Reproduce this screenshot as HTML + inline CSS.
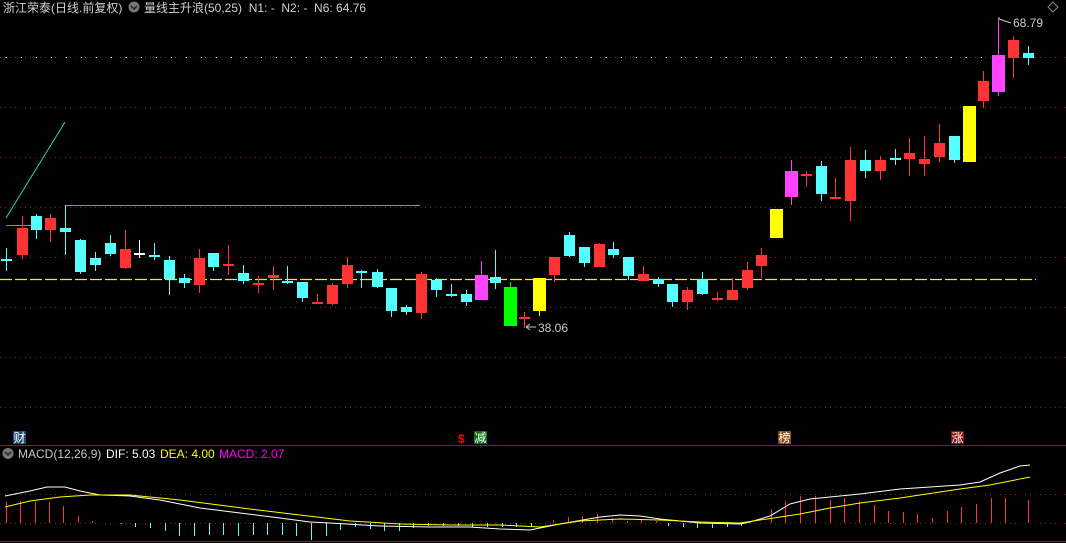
<!DOCTYPE html>
<html><head><meta charset="utf-8"><style>
html,body{margin:0;padding:0;background:#000;width:1066px;height:543px;overflow:hidden}
svg{display:block}
text{font-family:"Liberation Sans","Noto Sans CJK SC",sans-serif}
</style></head><body>
<svg id="s" width="1066" height="543" xmlns="http://www.w3.org/2000/svg">
<rect width="1066" height="543" fill="#000"/>
<g stroke="#a01818" stroke-width="1" stroke-dasharray="1,4">
<line x1="0" y1="57.5" x2="1066" y2="57.5"/><line x1="0" y1="107.5" x2="1066" y2="107.5"/>
<line x1="0" y1="157.5" x2="1066" y2="157.5"/><line x1="0" y1="207.5" x2="1066" y2="207.5"/>
<line x1="0" y1="257.5" x2="1066" y2="257.5"/><line x1="0" y1="307.5" x2="1066" y2="307.5"/>
<line x1="0" y1="357.5" x2="1066" y2="357.5"/><line x1="0" y1="407.5" x2="1066" y2="407.5"/>
<line x1="0" y1="494.5" x2="1066" y2="494.5"/><line x1="0" y1="523.5" x2="1066" y2="523.5"/>
</g>
<g stroke="#fff" stroke-dasharray="1,14"><line x1="6" y1="57.5" x2="990" y2="57.5"/></g>
<line x1="0" y1="445.5" x2="1066" y2="445.5" stroke="#b01010"/>
<line x1="0" y1="541.5" x2="1066" y2="541.5" stroke="#b01010"/>
<line x1="0" y1="279.5" x2="1036" y2="279.5" stroke="#f0f000" stroke-width="1.2" stroke-dasharray="12,3"/>
<line x1="6" y1="218" x2="65" y2="122" stroke="#2ad0d0"/>
<line x1="6" y1="225.5" x2="36" y2="225.5" stroke="#20d020"/>
<line x1="65.5" y1="205.5" x2="420" y2="205.5" stroke="#30d030"/>
<line x1="65.5" y1="205" x2="65.5" y2="255" stroke="#5ff"/>
<g id="c"></g>
<g id="m"></g>
<text x="3" y="12" font-size="12" fill="#d0d0d0">浙江荣泰(日线.前复权)</text>
<circle cx="134" cy="7" r="5.5" fill="#777"/><path d="M131 6l3 3 3-3" stroke="#222" fill="none" stroke-width="1.5"/>
<text x="144" y="12" font-size="12" fill="#d0d0d0">量线主升浪(50,25)&#160; N1: -&#160; N2: -&#160; N6: 64.76</text>
<path d="M1053 2l5 5-5 5-5-5z" fill="none" stroke="#888"/>
<path d="M999 19l0 -2M999 19l12 4" stroke="#ccc" fill="none"/>
<text x="1013" y="27" font-size="12" fill="#ccc">68.79</text>
<path d="M526 327h10M526 327l4-3M526 327l4 3" stroke="#ccc" fill="none"/>
<text x="538" y="332" font-size="12" fill="#ccc">38.06</text>
<rect x="13" y="431" width="13" height="13" fill="#1a4a80"/><text x="13.5" y="442" font-size="12" fill="#fff">财</text>
<text x="458" y="443" font-size="12" fill="#f00" font-weight="bold">$</text>
<rect x="474" y="431" width="13" height="13" fill="#107010"/><text x="474.5" y="442" font-size="12" fill="#fff">减</text>
<rect x="778" y="431" width="13" height="13" fill="#8a4a10"/><text x="778.5" y="442" font-size="12" fill="#fff">榜</text>
<rect x="951" y="431" width="13" height="13" fill="#8a1010"/><text x="951.5" y="442" font-size="12" fill="#fff">涨</text>
<circle cx="8" cy="453.5" r="5.5" fill="#777"/><path d="M5 452l3 3 3-3" stroke="#222" fill="none" stroke-width="1.5"/>
<text x="18" y="458" font-size="12" fill="#c8c8c8">MACD(12,26,9)</text>
<text x="106" y="458" font-size="12" fill="#fff">DIF: 5.03</text>
<text x="160" y="458" font-size="12" fill="#ff0">DEA: 4.00</text>
<text x="219" y="458" font-size="12" fill="#f0f">MACD: 2.07</text>
</svg>
<script>
var C={r:"#ff3333",c:"#55ffff",w:"#ffffff",m:"#ff44ff",g:"#00ff00",y:"#ffff00"};
var k=[[6,259,260,248,271,'c'],[22,228,255,216,259,'r'],[36,216,230,214,239,'c'],[50,218,230,214,242,'r'],[65,228,232,205,255,'c'],
[80,240,272,239,274,'c'],[95,258,265,252,271,'c'],[110,243,254,235,256,'c'],[125,249,268,230,269,'r'],[139,253,254,240,258,'w'],
[154,255,256,243,260,'c'],[169,260,279,256,295,'c'],[184,278,283,274,288,'c'],[199,258,285,249,293,'r'],[213,253,267,253,271,'c'],
[228,264,265,245,275,'r'],[243,273,281,265,284,'c'],[258,283,284,276,293,'r'],[273,275,278,266,290,'r'],[287,281,282,266,284,'c'],
[302,282,298,282,302,'c'],[317,302,303,294,304,'r'],[332,285,304,283,305,'r'],[347,265,284,257,288,'r'],[361,271,272,270,288,'c'],
[377,272,287,269,288,'c'],[391,288,311,288,317,'c'],[406,307,312,305,315,'c'],[421,274,313,272,319,'r'],[436,280,290,278,297,'c'],
[451,294,295,284,297,'c'],[466,294,302,290,306,'c'],[481,275,300,261,300,'m'],[495,277,283,250,289,'c'],[510,287,326,282,326,'g'],
[524,317,318,312,328,'r'],[539,278,311,278,316,'y'],[554,257,275,257,282,'r'],[569,235,256,232,257,'c'],[584,247,263,247,267,'c'],
[599,244,267,243,267,'r'],[613,249,255,242,258,'c'],[628,257,276,257,280,'c'],[643,274,281,266,281,'r'],[658,279,284,277,287,'c'],
[672,284,302,284,307,'c'],[687,290,302,287,310,'r'],[702,279,294,272,295,'c'],[717,298,299,292,301,'r'],[732,290,300,278,300,'r'],
[747,270,288,262,290,'r'],[761,255,266,248,278,'r'],[776,209,238,209,238,'y'],[791,171,197,160,205,'m'],[806,174,175,171,187,'r'],
[821,166,194,161,201,'c'],[835,197,198,178,198,'r'],[850,160,201,147,221,'r'],[865,160,171,150,178,'c'],[880,160,171,156,180,'r'],
[895,158,159,149,165,'c'],[909,153,159,138,176,'r'],[924,159,164,136,176,'r'],[939,143,157,124,162,'r'],[954,136,160,136,163,'c'],
[969,106,162,106,162,'y'],[983,81,101,71,108,'r'],[998,55,92,19,96,'m'],[1013,40,58,36,78,'r'],[1028,53,58,46,65,'c']];
var h='';
k.forEach(function(a){var col=C[a[5]];var big='mgy'.indexOf(a[5])>=0;var w=big?13:11;
h+='<line x1="'+(a[0]+.5)+'" y1="'+a[3]+'" x2="'+(a[0]+.5)+'" y2="'+a[4]+'" stroke="'+col+'"/>';
var hh=Math.max(a[2]-a[1],2);h+='<rect x="'+(a[0]-(w-1)/2)+'" y="'+a[1]+'" width="'+w+'" height="'+hh+'" fill="'+col+'"/>';});
document.getElementById('c').innerHTML=h;
var m='';
var red=[[6,502],[20,501],[35,502],[49,502],[63,506],[78,516],[92,521],[553,520],[568,517],[582,516],[597,514],[612,518],[627,521],[641,520],[656,521],[771,509],[785,501],[800,496],[815,496],[830,500],[844,498],[859,501],[874,505],[888,511],[903,512],[917,514],[932,518],[947,511],[961,507],[976,504],[991,498],[1005,498],[1028,500]];
red.forEach(function(b){m+='<line x1="'+(b[0]+.5)+'" y1="'+b[1]+'" x2="'+(b[0]+.5)+'" y2="523" stroke="#ff3333"/>';});
var cy=[[121,524],[135,527],[150,528],[165,531],[179,536],[194,536],[209,535],[223,535],[238,536],[253,535],[267,535],[282,535],[296,536],[311,540],[326,536],[340,530],[355,527],[370,529],[384,531],[399,531],[413,528],[428,526],[443,526],[458,526],[472,527],[487,527],[502,527],[516,527],[531,527],[668,526],[683,527],[697,528],[712,528],[727,527],[741,526]];
cy.forEach(function(b){m+='<line x1="'+(b[0]+.5)+'" y1="523" x2="'+(b[0]+.5)+'" y2="'+b[1]+'" stroke="#55ffff"/>';});
m+='<polyline fill="none" stroke="#fff" points="5,496 30,491 47,487 65,487 80,491 100,495 130,496 160,500 200,508 240,513 280,518 310,522 330,523 380,526 430,527 470,527 500,529 530,530 560,524 600,517 620,515 640,516 660,519 700,523 740,524 750,522 770,516 790,504 810,499 830,497 860,494 900,489 960,485 980,482 1000,473 1020,466 1030,465"/>';
m+='<polyline fill="none" stroke="#ff0" points="5,507 30,501 60,497 90,495 130,495 150,497 180,500 250,509 300,515 350,521 400,524 450,525 500,525 540,527 580,521 620,519 660,520 700,522 740,523 760,520 800,514 830,508 860,503 900,498 960,489 990,485 1030,477"/>';
document.getElementById('m').innerHTML=m;
</script>
</body></html>
